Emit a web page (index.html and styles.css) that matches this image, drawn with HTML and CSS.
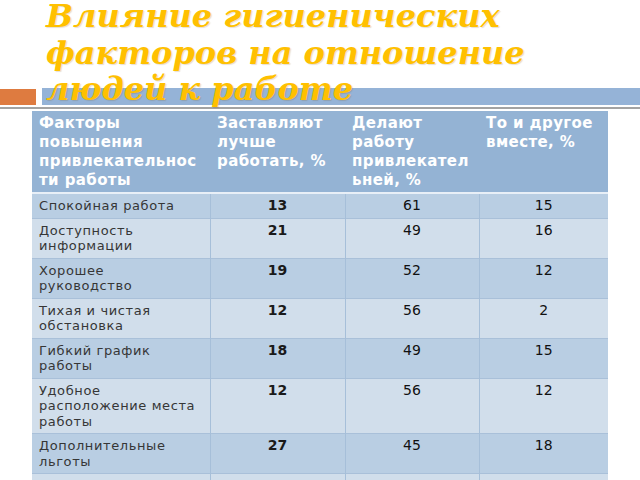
FILE: index.html
```html
<!DOCTYPE html>
<html lang="ru">
<head>
<meta charset="utf-8">
<link rel="stylesheet" href="styles.css">
</head>
<body>
<div class="slide">
  <header class="top">
    <div class="bar">
      <div class="bar-orange"></div>
      <div class="bar-blue"></div>
    </div>
    <h1 class="title">Влияние гигиенических<br>факторов на отношение<br>людей к работе</h1>
  </header>
  <table class="data">
    <colgroup>
      <col class="c1"><col class="c2"><col class="c3"><col class="c4">
    </colgroup>
    <thead>
      <tr>
        <th>Факторы<br>повышения<br>привлекательнос<br>ти работы</th>
        <th>Заставляют<br>лучше<br>работать, %</th>
        <th>Делают<br>работу<br>привлекател<br>ьней, %</th>
        <th>То и другое<br>вместе, %</th>
      </tr>
    </thead>
    <tbody>
      <tr class="odd"><td class="name">Спокойная работа</td><td class="n b">13</td><td class="n">61</td><td class="n">15</td></tr>
      <tr class="even"><td class="name">Доступность<br>информации</td><td class="n b">21</td><td class="n">49</td><td class="n">16</td></tr>
      <tr class="odd"><td class="name">Хорошее<br>руководство</td><td class="n b">19</td><td class="n">52</td><td class="n">12</td></tr>
      <tr class="even"><td class="name">Тихая и чистая<br>обстановка</td><td class="n b">12</td><td class="n">56</td><td class="n">2</td></tr>
      <tr class="odd"><td class="name">Гибкий график<br>работы</td><td class="n b">18</td><td class="n">49</td><td class="n">15</td></tr>
      <tr class="even"><td class="name">Удобное<br>расположение места<br>работы</td><td class="n b">12</td><td class="n">56</td><td class="n">12</td></tr>
      <tr class="odd"><td class="name">Дополнительные<br>льготы</td><td class="n b">27</td><td class="n">45</td><td class="n">18</td></tr>
      <tr class="even"><td class="name">Зарплата</td><td class="n b">11</td><td class="n">50</td><td class="n">14</td></tr>
    </tbody>
  </table>
</div>
</body>
</html>
```

FILE: styles.css
```css
html, body {
  margin: 0;
  padding: 0;
  background: #ffffff;
}
body {
  width: 640px;
  height: 480px;
  overflow: hidden;
}
.slide {
  width: 640px;
  height: 480px;
  overflow: hidden;
}
.top {
  display: grid;
  height: 111px;
}
.bar, .title {
  grid-area: 1 / 1;
}
.bar {
  margin-top: 88px;
  display: flex;
  align-items: flex-start;
  gap: 6px;
  border-bottom: 2px solid #a3a3a3;
  box-sizing: border-box;
  align-self: start;
  height: 21px;
}
.bar-orange {
  width: 36px;
  height: 16px;
  margin-top: 1px;
  background: #de7b40;
}
.bar-blue {
  flex: 1;
  height: 17px;
  background: #95b3d7;
}
.title {
  margin: -2px 0 0 0;
  padding-left: 46px;
  font-family: "DejaVu Serif", serif;
  font-weight: bold;
  font-style: italic;
  font-size: 32px;
  line-height: 36.5px;
  letter-spacing: 0;
  color: #ffc000;
  text-shadow: 1px 1px 1px rgba(120, 80, 0, 0.18);
  align-self: start;
  white-space: nowrap;
}
.data {
  margin-left: 32px;
  width: 576px;
  table-layout: fixed;
  border-collapse: collapse;
  font-family: "DejaVu Sans", sans-serif;
}
.c1 { width: 178px; }
.c2 { width: 135px; }
.c3 { width: 134px; }
.c4 { width: 129px; }
.data th {
  background: #94b3d4;
  color: #ffffff;
  font-weight: bold;
  font-size: 15px;
  line-height: 19px;
  letter-spacing: 0.4px;
  text-align: left;
  vertical-align: top;
  padding: 3px 7px 2px 7px;
  border-bottom: 2px solid #e8eff7;
  white-space: nowrap;
}
.data td {
  font-size: 13px;
  line-height: 15.5px;
  padding: 4px 7px 4px 7px;
  vertical-align: top;
  border-left: 1px solid #a6bfd9;
  border-top: 1px solid #a9c0d9;
  white-space: nowrap;
}
.data td:first-child {
  border-left: none;
}
.data td.name {
  color: #363636;
  letter-spacing: 0.6px;
}
.data td.n {
  text-align: center;
  color: #111111;
  font-size: 14px;
}
.data td.b {
  font-weight: bold;
  color: #1a1a1a;
}
.odd td {
  background: #b9cee3;
}
.even td {
  background: #d1deeb;
}
.data tbody tr:first-child td {
  border-top: none;
}
```
